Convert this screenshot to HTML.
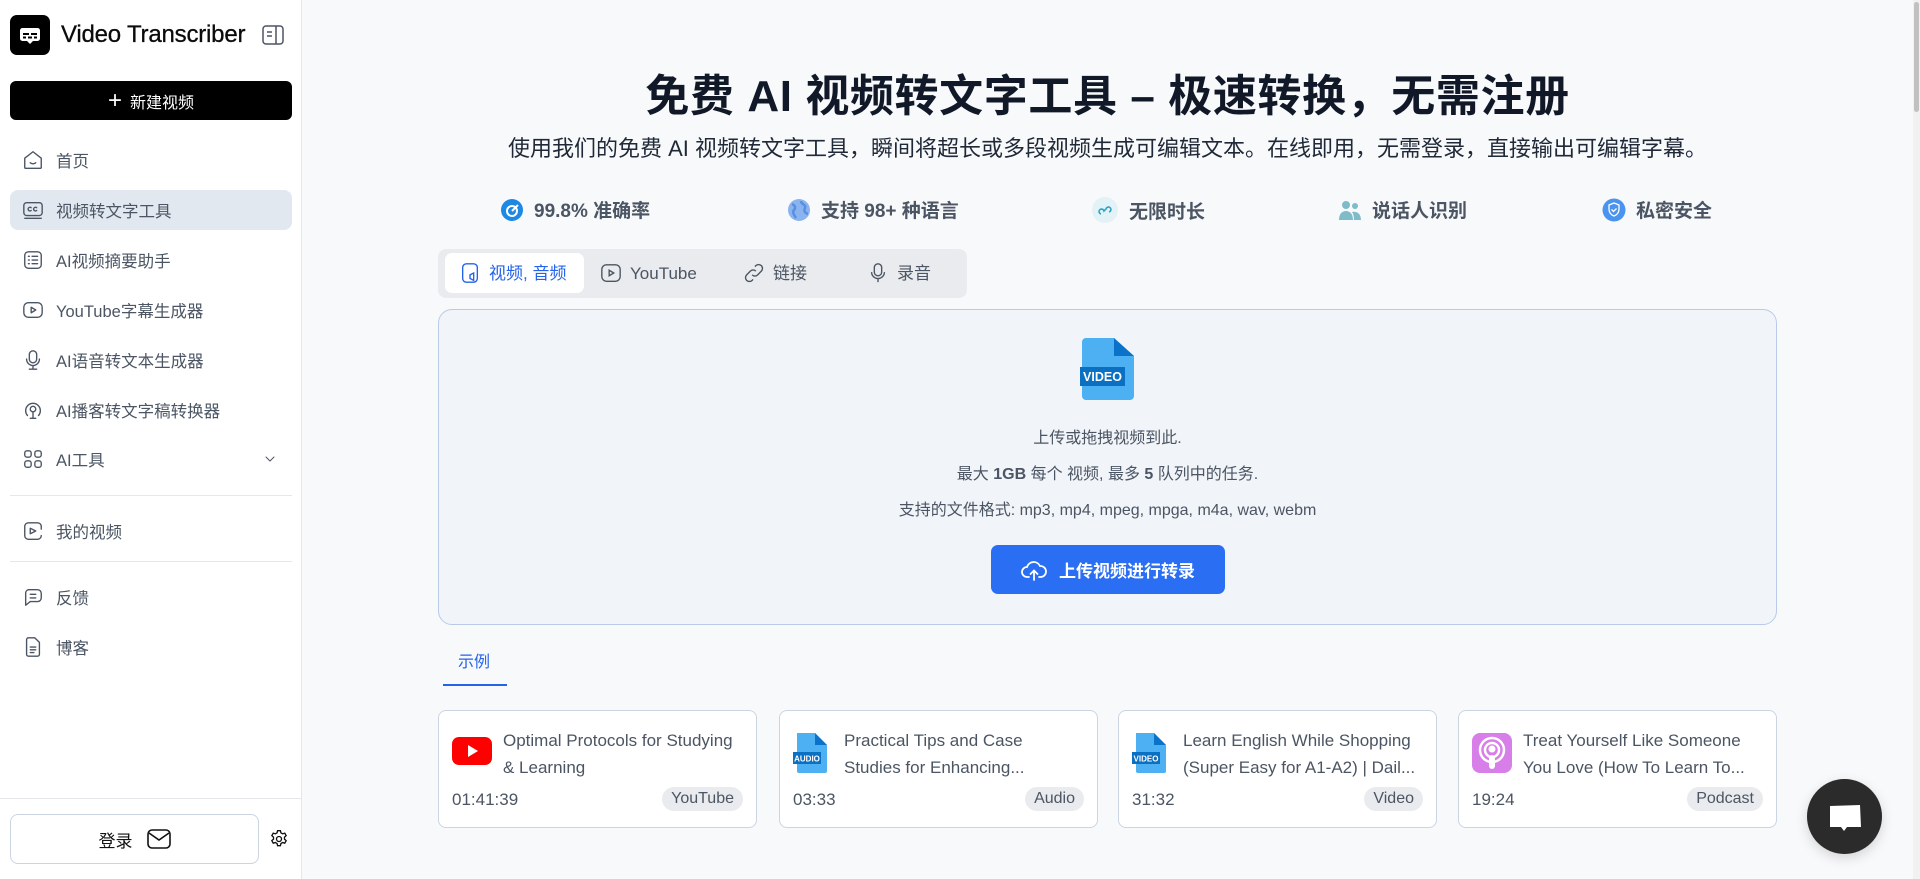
<!DOCTYPE html>
<html><head><meta charset="utf-8"><style>
*{box-sizing:border-box;margin:0;padding:0}
body{width:1920px;height:879px;overflow:hidden;background:#f8f9fb;font-family:"Liberation Sans","Noto Sans CJK SC",sans-serif;color:#475569;position:relative}
.abs{position:absolute}
#side{position:absolute;left:0;top:0;width:302px;height:879px;background:#fff;border-right:1px solid #e5e7eb}
.logo{left:10px;top:15px;width:40px;height:40px;background:#000;border-radius:7px}
.title{left:61px;top:21px;font-size:24px;color:#0b0b0b;font-weight:500;letter-spacing:-0.2px;-webkit-text-stroke:0.3px #0b0b0b}
.newbtn{left:10px;top:81px;width:282px;height:39px;background:#000;border-radius:6px;color:#fff;font-size:16px;display:flex;align-items:center;justify-content:center;gap:8px}
.nav{position:absolute;left:10px;width:282px;height:40px;display:flex;align-items:center;padding-left:12px;gap:12px;font-size:16.5px;color:#4b5563;border-radius:8px}
.nav svg{width:22px;height:22px;fill:none;stroke:#4b5563;stroke-width:1.5;stroke-linecap:round;stroke-linejoin:round}
.nav.act{background:#e2e8f0}
.hr{position:absolute;left:10px;width:282px;height:1px;background:#e5e7eb}
h1{position:absolute;left:302px;width:1611px;top:60px;text-align:center;font-size:44px;font-weight:700;color:#111827;letter-spacing:0.6px}
.sub{position:absolute;left:302px;width:1611px;top:131px;text-align:center;font-size:22px;color:#1f2937}
.feat{position:absolute;top:196px;display:flex;align-items:center;gap:10px;font-size:19px;font-weight:700;color:#4b5563}
.tabs{left:438px;top:249px;width:529px;height:49px;background:#e9ebee;border-radius:8px}
.tab{position:absolute;top:4px;height:40px;display:flex;align-items:center;gap:8px;font-size:17px;line-height:1;color:#4b5563}
.tab svg{width:22px;height:22px;fill:none;stroke:#4b5563;stroke-width:1.5}
.box{left:438px;top:309px;width:1339px;height:316px;background:#f1f4f8;border:1px solid #b9cbe8;border-radius:14px}
.line{position:absolute;left:0;width:100%;text-align:center;font-size:16px;color:#4b5563}
.upbtn{left:991px;top:545px;width:234px;height:49px;background:#2a6ef3;border-radius:7px;color:#fff;font-size:17px;font-weight:700;display:flex;align-items:center;justify-content:center;gap:12px}
.card{position:absolute;top:710px;width:319px;height:118px;background:#fff;border:1px solid #cbd5e1;border-radius:8px}
.ct{position:absolute;left:64px;top:16px;width:250px;white-space:nowrap;font-size:17px;line-height:27px;color:#4b5563}
.tm{position:absolute;left:13px;top:79px;font-size:17px;color:#4b5563}
.tg{position:absolute;right:13px;top:76px;height:24px;padding:0 9px;background:#e9ebee;border-radius:12px;font-size:16px;line-height:24px;color:#4b5563}
.fic{position:absolute;left:13px;top:22px}
</style></head><body>
<div id="side">
 <div class="abs logo"><svg width="40" height="40" viewBox="0 0 40 40"><rect x="10" y="13" width="20" height="13" rx="2.5" fill="#fff"/><path d="M17 26l3 3 3-3z" fill="#fff"/><rect x="13" y="18" width="6" height="2" fill="#000"/><rect x="21" y="18" width="6" height="2" fill="#000"/><rect x="13" y="21.5" width="3" height="2" fill="#000"/><rect x="18" y="21.5" width="4" height="2" fill="#000"/><rect x="24" y="21.5" width="3" height="2" fill="#000"/></svg></div>
 <div class="abs title">Video Transcriber</div>
 <svg class="abs" style="left:262px;top:25px" width="22" height="20" viewBox="0 0 22 20" fill="none" stroke="#4b5563" stroke-width="1.5"><rect x="1" y="1" width="20" height="18" rx="3"/><path d="M14 1v18M5 7h5M5 11h5"/></svg>
 <div class="abs newbtn"><span style="font-size:24px;font-weight:300;line-height:1">+</span>新建视频</div>
 <div class="nav" style="top:140px"><svg viewBox="0 0 24 24"><path d="M3 10l9-7 9 7v10a1 1 0 0 1-1 1H4a1 1 0 0 1-1-1z"/><path d="M9 15c1.5 1.5 4.5 1.5 6 0"/></svg>首页</div>
 <div class="nav act" style="top:190px"><svg viewBox="0 0 24 24"><rect x="2" y="4" width="20" height="14" rx="3"/><path d="M3 21h18M10 9.5a2 2 0 1 0 0 3M16 9.5a2 2 0 1 0 0 3"/></svg>视频转文字工具</div>
 <div class="nav" style="top:240px"><svg viewBox="0 0 24 24"><rect x="3" y="3" width="18" height="18" rx="4"/><path d="M7 8h1M11 8h6M7 12h1M11 12h6M7 16h1M11 16h6"/></svg>AI视频摘要助手</div>
 <div class="nav" style="top:290px"><svg viewBox="0 0 24 24"><rect x="2" y="4" width="20" height="16" rx="5"/><path d="M10 9l5 3-5 3z"/></svg>YouTube字幕生成器</div>
 <div class="nav" style="top:340px"><svg viewBox="0 0 24 24"><rect x="8" y="2" width="8" height="13" rx="4"/><path d="M5 11a7 7 0 0 0 14 0M12 18v4M8 22h8"/></svg>AI语音转文本生成器</div>
 <div class="nav" style="top:390px"><svg viewBox="0 0 24 24"><path d="M6 18a8 8 0 1 1 12 0"/><circle cx="12" cy="11" r="3"/><path d="M12 14v7M9 21h6"/></svg>AI播客转文字稿转换器</div>
 <div class="nav" style="top:439px"><svg viewBox="0 0 24 24"><rect x="3" y="3" width="7" height="7" rx="2.5"/><rect x="14" y="3" width="7" height="7" rx="2.5"/><rect x="3" y="14" width="7" height="7" rx="2.5"/><rect x="14" y="14" width="7" height="7" rx="2.5"/></svg>AI工具<svg style="position:absolute;right:14px;width:16px;height:16px" viewBox="0 0 24 24"><path d="M6 9l6 6 6-6"/></svg></div>
 <div class="hr" style="top:495px"></div>
 <div class="nav" style="top:511px"><svg viewBox="0 0 24 24"><path d="M21 10V7a4 4 0 0 0-4-4H7a4 4 0 0 0-4 4v10a4 4 0 0 0 4 4h10a4 4 0 0 0 4-4"/><path d="M9 9l6 3-6 3z"/></svg>我的视频</div>
 <div class="hr" style="top:561px"></div>
 <div class="nav" style="top:577px"><svg viewBox="0 0 24 24"><path d="M7 4h10a4 4 0 0 1 4 4v5a4 4 0 0 1-4 4H9l-5 4V8a4 4 0 0 1 3-4z"/><path d="M9 9h6M9 13h6"/></svg>反馈</div>
 <div class="nav" style="top:627px"><svg viewBox="0 0 24 24"><path d="M14 2H7a2 2 0 0 0-2 2v16a2 2 0 0 0 2 2h10a2 2 0 0 0 2-2V7z"/><path d="M9 12h6M9 15h6M9 18h4"/></svg>博客</div>
 <div class="hr" style="left:0;width:302px;top:798px"></div>
 <div class="abs" style="left:10px;top:814px;width:249px;height:50px;border:1px solid #cbd5e1;border-radius:8px;display:flex;align-items:center;justify-content:center;gap:14px;font-size:17px;color:#111">登录<svg width="24" height="20" viewBox="0 0 24 20" fill="none" stroke="#111" stroke-width="1.6"><rect x="1" y="1" width="22" height="18" rx="4"/><path d="M2 4l10 7 10-7"/></svg></div>
 <svg class="abs" style="left:269px;top:829px" width="20" height="20" viewBox="0 0 24 24" fill="none" stroke="#111" stroke-width="1.6"><circle cx="12" cy="12" r="3"/><path d="M10.3 2h3.4l.6 2.6 2 1.2 2.6-.8 1.7 3-2 1.8v2.4l2 1.8-1.7 3-2.6-.8-2 1.2-.6 2.6h-3.4l-.6-2.6-2-1.2-2.6.8-1.7-3 2-1.8v-2.4l-2-1.8 1.7-3 2.6.8 2-1.2z"/></svg>
</div>

<h1>免费 AI 视频转文字工具 – 极速转换，无需注册</h1>
<div class="sub">使用我们的免费 AI 视频转文字工具，瞬间将超长或多段视频生成可编辑文本。在线即用，无需登录，直接输出可编辑字幕。</div>

<div class="feat" style="left:500px"><svg width="24" height="24" viewBox="0 0 24 24"><circle cx="12" cy="12" r="11" fill="#1e88e5"/><circle cx="12" cy="13" r="5" fill="none" stroke="#fff" stroke-width="2"/><path d="M12 13l6-6" stroke="#fff" stroke-width="2"/></svg>99.8% 准确率</div>
<div class="feat" style="left:787px"><svg width="24" height="24" viewBox="0 0 24 24"><circle cx="12" cy="12" r="11" fill="#8ab4f0"/><path d="M5 6c3 1 4 4 2 6s0 5 2 8M14 3c0 3 3 3 4 5s-2 4 0 6 3 2 3 2" fill="none" stroke="#5a8fe0" stroke-width="2.5"/></svg>支持 98+ 种语言</div>
<div class="feat" style="left:1091px"><svg width="28" height="28" viewBox="0 0 28 28"><circle cx="14" cy="14" r="13" fill="#e3f2f7"/><path d="M10 18a2.5 2.5 0 1 1 3-3l2-2a2.5 2.5 0 1 1 3 3" fill="none" stroke="#2aa6c9" stroke-width="1.6"/></svg>无限时长</div>
<div class="feat" style="left:1338px"><svg width="24" height="24" viewBox="0 0 24 24" fill="#7fbcc9"><circle cx="8" cy="7" r="4"/><circle cx="17" cy="8" r="3"/><path d="M1 22c0-6 3-9 7-9s7 3 7 9zM16 22c0-4-1-7-2-8 4-1 9 1 9 8z"/></svg>说话人识别</div>
<div class="feat" style="left:1602px"><svg width="24" height="24" viewBox="0 0 24 24"><circle cx="12" cy="12" r="11.5" fill="#4a94ef"/><path d="M12 5l5 2v4c0 4-2.5 6-5 7-2.5-1-5-3-5-7V7z" fill="none" stroke="#fff" stroke-width="1.3"/><path d="M9.5 11.5l2 2 3-3" fill="none" stroke="#fff" stroke-width="1.3"/></svg>私密安全</div>

<div class="abs tabs">
 <div class="tab" style="left:7px;width:139px;background:#fff;border-radius:7px;padding-left:14px;color:#2563eb"><svg viewBox="0 0 24 24" style="stroke:#2563eb"><path d="M8 2h8a4 4 0 0 1 4 4v12a4 4 0 0 1-4 4H8a4 4 0 0 1-4-4V6a4 4 0 0 1 4-4z"/><path d="M12 14l4-2v8l-4-2z"/></svg>视频, 音频</div>
 <div class="tab" style="left:162px"><svg viewBox="0 0 24 24"><rect x="2" y="3" width="20" height="18" rx="5"/><path d="M10 9l5 3-5 3z"/></svg>YouTube</div>
 <div class="tab" style="left:305px"><svg viewBox="0 0 24 24"><path d="M10 14a4 4 0 0 0 6 0l4-4a4 4 0 0 0-6-6l-1 1M14 10a4 4 0 0 0-6 0l-4 4a4 4 0 0 0 6 6l1-1"/></svg>链接</div>
 <div class="tab" style="left:429px"><svg viewBox="0 0 24 24"><rect x="8" y="2" width="8" height="13" rx="4"/><path d="M5 11a7 7 0 0 0 14 0M12 18v4"/></svg>录音</div>
</div>

<div class="abs box">
 <svg class="abs" style="left:641px;top:28px" width="56" height="62" viewBox="0 0 56 62"><path d="M4 0h30l20 18v40a4 4 0 0 1-4 4H6a4 4 0 0 1-4-4V4a4 4 0 0 1 4-4z" fill="#4db0f2"/><path d="M34 0v18h20z" fill="#0b72c9"/><rect x="0" y="29" width="45" height="19" fill="#0b6fc2"/><text x="22.5" y="43" text-anchor="middle" font-family="Liberation Sans" font-weight="700" font-size="12.5" fill="#fff">VIDEO</text></svg>
 <div class="line" style="top:114px">上传或拖拽视频到此.</div>
 <div class="line" style="top:150px">最大 <b>1GB</b> 每个 视频, 最多 <b>5</b> 队列中的任务.</div>
 <div class="line" style="top:186px">支持的文件格式: mp3, mp4, mpeg, mpga, m4a, wav, webm</div>
</div>
<div class="abs upbtn"><svg width="26" height="24" viewBox="0 0 26 24" fill="none" stroke="#fff" stroke-width="1.8" stroke-linecap="round"><path d="M8 19H6a5 5 0 0 1 0-10 7 7 0 0 1 13-1 5 5 0 0 1 1 11h-2"/><path d="M13 22v-9M9.5 16l3.5-3.5 3.5 3.5"/></svg>上传视频进行转录</div>

<div class="abs" style="left:458px;top:648px;font-size:16px;color:#2563eb">示例</div>
<div class="abs" style="left:443px;top:684px;width:64px;height:2px;background:#2563eb"></div>

<div class="card" style="left:438px"><svg class="fic" style="top:26px" width="40" height="28" viewBox="0 0 40 28"><rect width="40" height="28" rx="7" fill="#f00"/><path d="M16 8l10 6-10 6z" fill="#fff"/></svg><div class="ct">Optimal Protocols for Studying<br>&amp; Learning</div><div class="tm">01:41:39</div><div class="tg">YouTube</div></div>
<div class="card" style="left:779px"><svg class="fic" width="34" height="40" viewBox="0 0 34 40"><path d="M4 0h18l12 12v26a2 2 0 0 1-2 2H6a2 2 0 0 1-2-2z" fill="#4db0f2"/><path d="M22 0v12h12z" fill="#0b72c9"/><rect x="0" y="19" width="28" height="12" fill="#0b6fc2"/><text x="14" y="28.5" text-anchor="middle" font-family="Liberation Sans" font-weight="700" font-size="8" fill="#fff">AUDIO</text></svg><div class="ct">Practical Tips and Case<br>Studies for Enhancing...</div><div class="tm">03:33</div><div class="tg">Audio</div></div>
<div class="card" style="left:1118px"><svg class="fic" width="34" height="40" viewBox="0 0 34 40"><path d="M4 0h18l12 12v26a2 2 0 0 1-2 2H6a2 2 0 0 1-2-2z" fill="#4db0f2"/><path d="M22 0v12h12z" fill="#0b72c9"/><rect x="0" y="19" width="28" height="12" fill="#0b6fc2"/><text x="14" y="28.5" text-anchor="middle" font-family="Liberation Sans" font-weight="700" font-size="8" fill="#fff">VIDEO</text></svg><div class="ct">Learn English While Shopping<br>(Super Easy for A1-A2) | Dail...</div><div class="tm">31:32</div><div class="tg">Video</div></div>
<div class="card" style="left:1458px"><svg class="fic" width="40" height="40" viewBox="0 0 40 40"><rect width="40" height="40" rx="8" fill="#d77ee8"/><circle cx="20" cy="17" r="12" fill="none" stroke="#fff" stroke-width="2.5"/><circle cx="20" cy="17" r="7" fill="none" stroke="#fff" stroke-width="2.5"/><circle cx="20" cy="16" r="3.5" fill="#fff"/><rect x="17" y="22" width="6" height="14" rx="3" fill="#fff"/></svg><div class="ct">Treat Yourself Like Someone<br>You Love (How To Learn To...</div><div class="tm">19:24</div><div class="tg">Podcast</div></div>

<div class="abs" style="left:1807px;top:779px;width:75px;height:75px;border-radius:50%;background:#2b2b2b;box-shadow:0 4px 12px rgba(0,0,0,.15)"><svg width="75" height="75" viewBox="0 0 75 75"><path d="M23 27l30-1 1 22-14 0-3 4-3-4-11 0z" fill="#fff"/></svg></div>
<div class="abs" style="left:1913px;top:0;width:7px;height:879px;background:#f1f1f1"><div style="margin:2px 1px;height:110px;background:#c1c1c1;border-radius:3px"></div></div>
</body></html>
